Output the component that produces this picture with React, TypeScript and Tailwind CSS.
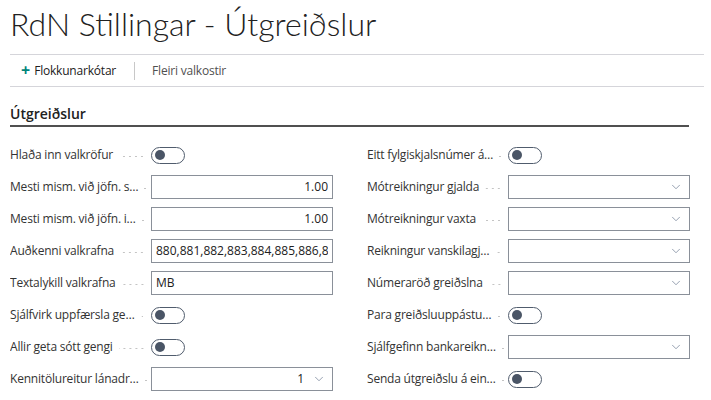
import { ChevronDown } from "lucide-react";

type Field =
  | { label: string; kind: "toggle" }
  | { label: string; kind: "text"; value: string; align?: "right" }
  | { label: string; kind: "select"; value?: string };

const left: Field[] = [
  { label: "Hlaða inn valkröfur", kind: "toggle" },
  { label: "Mesti mism. við jöfn. s…", kind: "text", value: "1.00", align: "right" },
  { label: "Mesti mism. við jöfn. i…", kind: "text", value: "1.00", align: "right" },
  { label: "Auðkenni valkrafna", kind: "text", value: "880,881,882,883,884,885,886,887,888" },
  { label: "Textalykill valkrafna", kind: "text", value: "MB" },
  { label: "Sjálfvirk uppfærsla ge…", kind: "toggle" },
  { label: "Allir geta sótt gengi", kind: "toggle" },
  { label: "Kennitölureitur lánadr…", kind: "select", value: "1" },
];

const right: Field[] = [
  { label: "Eitt fylgiskjalsnúmer á…", kind: "toggle" },
  { label: "Mótreikningur gjalda", kind: "select" },
  { label: "Mótreikningur vaxta", kind: "select" },
  { label: "Reikningur vanskilagj…", kind: "select" },
  { label: "Númeraröð greiðslna", kind: "select" },
  { label: "Para greiðsluuppástu…", kind: "toggle" },
  { label: "Sjálfgefinn bankareikn…", kind: "select" },
  { label: "Senda útgreiðslu á ein…", kind: "toggle" },
];

function Toggle() {
  return (
    <div className="w-[34px] h-[17px] rounded-full border border-[#505c6d] flex items-center px-[3px]">
      <div className="w-[10px] h-[10px] rounded-full bg-[#4a5566]" />
    </div>
  );
}

function Row({ f }: { f: Field }) {
  return (
    <div className="flex items-center h-[32px]">
      <div className="w-[141px] flex items-center overflow-hidden pr-[6px]">
        <span className="whitespace-nowrap text-[#333] tracking-[-0.2px]">{f.label}</span>
        <span className="flex-1 h-[3px] ml-[6px] mt-[3px] min-w-[4px] bg-[radial-gradient(circle,#c4c4c4_0.8px,transparent_1px)] bg-[length:6px_3px] bg-right" />
      </div>
      <div className="w-[182px]">
        {f.kind === "toggle" && <Toggle />}
        {f.kind === "text" && (
          <div
            className={`h-[24px] border border-[#8a9099] flex items-center px-[4px] overflow-hidden text-[#212121] ${
              f.align === "right" ? "justify-end" : ""
            }`}
          >
            <span className="whitespace-nowrap overflow-hidden">{f.value}</span>
          </div>
        )}
        {f.kind === "select" && (
          <div className="h-[24px] border border-[#8a9099] flex items-center justify-end pr-[6px] text-[#212121]">
            {f.value && <span className="mr-[8px]">{f.value}</span>}
            <ChevronDown className="w-[14px] h-[14px] text-[#6b7a90]" strokeWidth={1.2} />
          </div>
        )}
      </div>
    </div>
  );
}

export default function App() {
  return (
    <div
      className="w-[711px] h-[400px] bg-white overflow-hidden text-[12px]"
      style={{ fontFamily: '"Open Sans", "Noto Sans", sans-serif' }}
    >
      <h1
        className="pl-[10px] pt-[1px] h-[54px] text-[32px] font-light text-[#212121] leading-[46px]"
        style={{ fontFamily: 'Lato, "Open Sans", sans-serif' }}
      >
        RdN Stillingar - Útgreiðslur
      </h1>
      <div className="ml-[10px] mr-[7px] border-t border-[#d5d5da]" />
      <div className="flex items-center h-[31px] pl-[21px] text-[#212121]">
        <span className="text-[#00857a] text-[16px] font-bold leading-none mr-[4px] -mt-[2px]">+</span>
        <span className="tracking-[-0.2px]">Flokkunarkótar</span>
        <span className="w-px h-[18px] bg-[#c8c8c8] ml-[18px] mr-[17px]" />
        <span className="text-[#505050] tracking-[-0.2px]">Fleiri valkostir</span>
      </div>
      <div className="ml-[10px] mr-[7px] border-t border-[#d5d5da]" />
      <div className="mx-[10px] w-[679px] mt-[16px] pb-[1px] border-b-2 border-[#505050]">
        <span className="text-[14px] font-semibold text-[#212121]">Útgreiðslur</span>
      </div>
      <div className="flex pl-[10px] mt-[12px] gap-[34px]">
        <div>
          {left.map((f) => (
            <Row key={f.label} f={f} />
          ))}
        </div>
        <div>
          {right.map((f) => (
            <Row key={f.label} f={f} />
          ))}
        </div>
      </div>
    </div>
  );
}
